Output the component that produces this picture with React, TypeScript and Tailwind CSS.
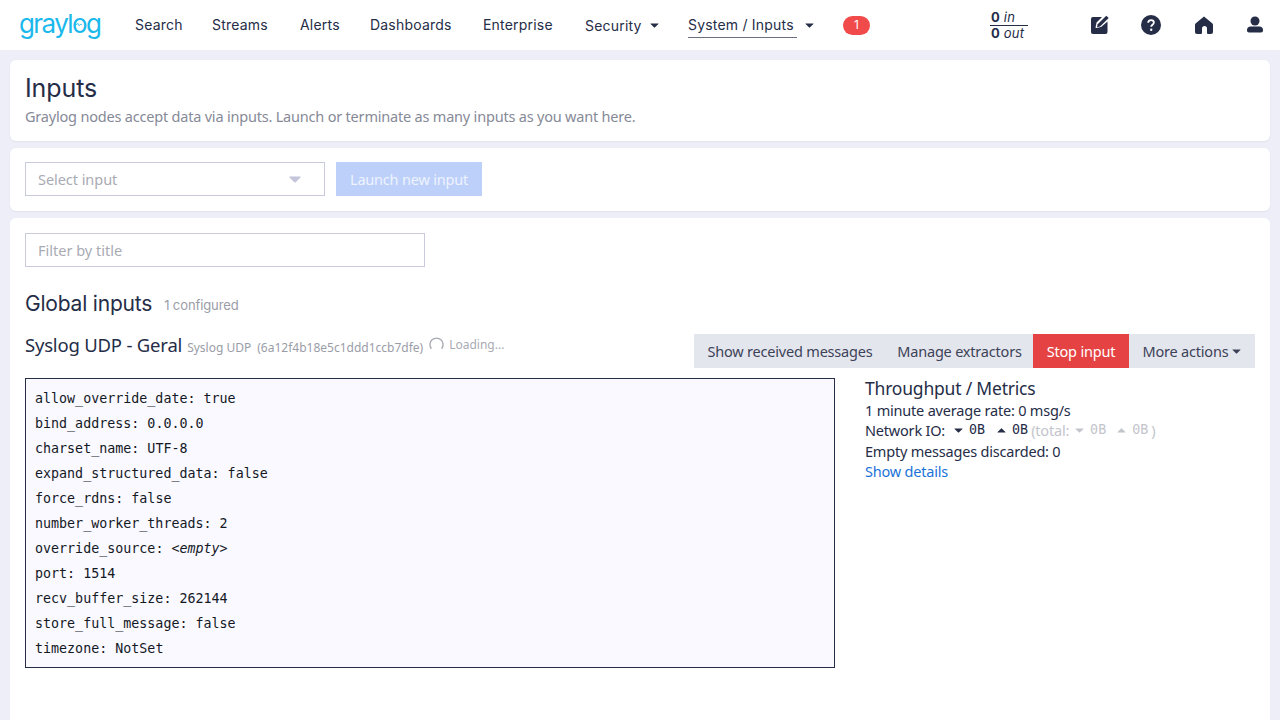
import React from 'react';

const navItems = [
  { label: 'Search', w: 'w-[47px]' },
  { label: 'Streams', w: 'w-[58px]' },
  { label: 'Alerts', w: 'w-[40px]' },
  { label: 'Dashboards', w: 'w-[83px]' },
  { label: 'Enterprise', w: 'w-[71px]' },
];

const config: [string, React.ReactNode][] = [
  ['allow_override_date', 'true'],
  ['bind_address', '0.0.0.0'],
  ['charset_name', 'UTF-8'],
  ['expand_structured_data', 'false'],
  ['force_rdns', 'false'],
  ['number_worker_threads', '2'],
  ['override_source', <em key="empty">&lt;empty&gt;</em>],
  ['port', '1514'],
  ['recv_buffer_size', '262144'],
  ['store_full_message', 'false'],
  ['timezone', 'NotSet'],
];

function Caret({ className }: { className: string }) {
  return (
    <svg viewBox="0 0 10 6" className={className} fill="currentColor">
      <path d="M0.6 0.5h8.8c.4 0 .6.5.3.8L5.4 5.5c-.2.2-.6.2-.8 0L.3 1.3C0 1 .2.5.6.5z" />
    </svg>
  );
}

function CaretUp({ className }: { className: string }) {
  return (
    <svg viewBox="0 0 10 6" className={className} fill="currentColor">
      <path d="M0.6 5.5h8.8c.4 0 .6-.5.3-.8L5.4.5c-.2-.2-.6-.2-.8 0L.3 4.7c-.3.3-.1.8.3.8z" />
    </svg>
  );
}

function Logo() {
  return (
    <div className="relative w-[82px] h-[30px] -mt-[2px] text-[#1bb8ec] text-[26px] leading-[30px] tracking-[-1.6px] font-normal font-[Inter,sans-serif]">
      graylog
      <svg viewBox="0 0 10 6" className="absolute left-[56px] top-[13px] w-[7px] h-[5px]" fill="none" stroke="#1bb8ec" strokeWidth="1">
        <path d="M0 3h3l1-2 2 4 1-2h3" />
      </svg>
    </div>
  );
}

export default function App() {
  return (
    <div className="h-[720px] overflow-hidden bg-[#eeeef8] text-[#252d47] font-['Noto_Sans',sans-serif] text-[14.5px] tracking-[-0.2px]">
      <nav className="h-[50px] bg-white flex items-center pl-[19px] font-[Inter,sans-serif] text-[14px] tracking-[0.2px]">
        <div className="w-[116px]">
          <Logo />
        </div>
        <div className="flex items-center gap-[30px] -mt-[2px]">
          {navItems.map((item) => (
            <a key={item.label} className={`${item.w} whitespace-nowrap`}>
              {item.label}
            </a>
          ))}
        </div>
        <a className="ml-[31px] flex items-center gap-[9px] whitespace-nowrap">
          <span className="w-[56px]">Security</span>
          <Caret className="w-[9px] h-[5px]" />
        </a>
        <a className="ml-[29px] flex items-center gap-[8px] whitespace-nowrap">
          <span className="w-[109px] border-b border-[#6b7080] pb-[2px] pt-[2px]">System / Inputs</span>
          <Caret className="w-[9px] h-[5px]" />
        </a>
        <span className="ml-[29px] w-[27px] h-[19px] rounded-full bg-[#f04a4a] text-white text-[12px] flex items-center justify-center">
          1
        </span>
        <div className="ml-[120px] w-[38px] text-[13px] leading-[15px]">
          <div className="border-b border-[#252d47] pl-[1px]">
            <b className="font-bold">0</b> <i className="font-normal">in</i>
          </div>
          <div className="pl-[1px]">
            <b className="font-bold">0</b> <i className="font-normal">out</i>
          </div>
        </div>
        <div className="ml-[62px] flex items-center gap-[31px]">
          <svg viewBox="0 0 20 20" className="w-[20px] h-[20px]" fill="#252d47">
            <path d="M3 2h9l-5.2 5.2a1 1 0 0 0-.3.5L5.600 12a.8.8 0 0 0 1 1l4.300-.9a1 1 0 0 0 .5-.3L17.500 6.500V17a2 2 0 0 1-2 2H3a2 2 0 0 1-2-2V4a2 2 0 0 1 2-2z" />
            <path d="M16.300.7l2.400 2.400-8.700 8.500-3 .7.700-3z" />
          </svg>
          <svg viewBox="0 0 20 20" className="w-[20px] h-[20px]">
            <circle cx="10" cy="10" r="10" fill="#252d47" />
            <path d="M7.200 7.800c0-1.700 1.300-2.700 2.900-2.700s2.800 1 2.800 2.500c0 2.200-2.700 2.200-2.700 4.100" fill="none" stroke="#fff" strokeWidth="1.800" />
            <circle cx="10.200" cy="14.700" r="1.200" fill="#fff" />
          </svg>
          <svg viewBox="0 0 20 20" className="ml-[2px] w-[20px] h-[20px]" fill="#252d47">
            <path d="M10 1.500 18.200 8.300c.5.4.8 1 .8 1.600V17a2 2 0 0 1-2 2h-3a1 1 0 0 1-1-1v-4.500a2.500 2.500 0 0 0-5 0V18a1 1 0 0 1-1 1H3a2 2 0 0 1-2-2V9.900c0-.6.3-1.200.8-1.600z" />
          </svg>
          <svg viewBox="0 0 20 20" className="w-[20px] h-[20px]" fill="#252d47">
            <circle cx="10" cy="6" r="4.500" />
            <path d="M5.500 11.500h9c2 0 3.500 1.500 3.500 3.500v.5c0 1-.8 2-2 2H4c-1.200 0-2-1-2-2V15c0-2 1.500-3.500 3.500-3.500z" />
          </svg>
        </div>
      </nav>

      <div className="p-[10px] flex flex-col gap-[7px]">
        <section className="h-[81px] bg-white rounded-[6px] px-[15px] pt-[12px] shadow-[0_1px_2px_rgba(0,0,0,0.05)]">
          <h1 className="text-[25px] leading-[32px] font-[Inter,sans-serif] tracking-[-0.1px]">Inputs</h1>
          <p className="leading-[22px] mt-[1px] text-[#868a97]">
            Graylog nodes accept data via inputs. Launch or terminate as many inputs as you want here.
          </p>
        </section>

        <section className="h-[63px] bg-white rounded-[6px] px-[15px] pt-[14px] flex gap-[11px] shadow-[0_1px_2px_rgba(0,0,0,0.05)]">
          <div className="w-[300px] h-[34px] border border-[#c9cadb] flex items-center justify-between pt-[1px] pl-[12px] pr-[23px] text-[#a9abb3] tracking-[-0.05px]">
            Select input
            <Caret className="w-[12px] h-[7px] text-[#c4c4da]" />
          </div>
          <button className="w-[146px] h-[34px] pt-[1px] bg-[#bdd0fa] text-[#eef3fe]">Launch new input</button>
        </section>

        <section className="h-[600px] bg-white rounded-[6px] px-[15px] pt-[15px]">
          <div className="w-[400px] h-[34px] border border-[#c9cadb] flex items-center pt-[1px] pl-[12px] text-[#a9abb3] tracking-normal">
            Filter by title
          </div>
          <div className="mt-[23px] flex items-baseline gap-[12px] font-[Inter,sans-serif]">
            <h2 className="text-[21px] leading-[28px] tracking-[-0.2px]">Global inputs</h2>
            <span className="text-[13px] text-[#9a9da8] tracking-[-0.1px] -translate-y-[1px]">1 configured</span>
          </div>
          <div className="flex justify-between mt-[16px]">
            <div className="flex items-baseline h-[34px] -mt-[2px]">
              <h3 className="text-[18.5px] leading-[26px]">Syslog UDP - Geral</h3>
              <span className="ml-[5px] text-[12px] tracking-normal text-[#9a9da8]">Syslog UDP</span>
              <span className="ml-[6px] text-[12px] tracking-normal text-[#9a9da8]">(6a12f4b18e5c1ddd1ccb7dfe)</span>
              <svg viewBox="0 0 16 16" className="ml-[6px] w-[15px] h-[15px] self-start mt-[5px] text-[#a9abb3]" fill="none" stroke="currentColor" strokeWidth="1.500">
                <path d="M2.500 12.500A7 7 0 1 1 13.500 12.500" />
              </svg>
              <span className="ml-[5px] text-[12px] tracking-normal text-[#a9abb3] self-start mt-[4px]">Loading...</span>
            </div>
            <div className="flex h-[34px] bg-[#e4e6ee] text-[#3c4257]">
              <button className="w-[192px] pt-[1px] whitespace-nowrap">Show received messages</button>
              <button className="w-[147px] pt-[1px] whitespace-nowrap">Manage extractors</button>
              <button className="w-[96px] pt-[1px] whitespace-nowrap bg-[#e54343] text-white">Stop input</button>
              <button className="w-[126px] pt-[1px] whitespace-nowrap flex items-center justify-center gap-[4px]">
                More actions <Caret className="w-[9px] h-[5px]" />
              </button>
            </div>
          </div>
          <div className="flex mt-[10px]">
            <pre className="w-[810px] h-[290px] border border-[#252d47] bg-[#f9f9ff] px-[9px] py-[7px] text-[13.33px] leading-[25px] tracking-normal text-[#14181f] font-['DejaVu_Sans_Mono',monospace]">
              {config.map(([key, value]) => (
                <div key={key}>
                  {key}: {value}
                </div>
              ))}
            </pre>
            <div className="ml-[30px] leading-[20.5px] text-[#252d47]">
              <h4 className="text-[17.5px] leading-[20px] mb-[1.5px]">Throughput / Metrics</h4>
              <div>1 minute average rate: 0 msg/s</div>
              <div className="flex items-center whitespace-nowrap">
                Network IO:
                <Caret className="ml-[9px] w-[9px] h-[5px]" />
                <span className="ml-[6px] text-[13.33px] tracking-normal font-['DejaVu_Sans_Mono',monospace]">0B</span>
                <CaretUp className="ml-[12px] w-[9px] h-[5px]" />
                <span className="ml-[6px] text-[13.33px] tracking-normal font-['DejaVu_Sans_Mono',monospace]">0B</span>
                <span className="ml-[3px] text-[#c3c5cc] flex items-center">
                  (total:
                  <Caret className="ml-[6px] w-[9px] h-[5px]" />
                  <span className="ml-[6px] text-[13.33px] tracking-normal font-['DejaVu_Sans_Mono',monospace]">0B</span>
                  <CaretUp className="ml-[11px] w-[9px] h-[5px]" />
                  <span className="ml-[6px] text-[13.33px] tracking-normal font-['DejaVu_Sans_Mono',monospace]">0B</span>
                  <span className="ml-[3px]">)</span>
                </span>
              </div>
              <div>Empty messages discarded: 0</div>
              <a className="text-[#1a73d8]">Show details</a>
            </div>
          </div>
        </section>
      </div>
    </div>
  );
}
